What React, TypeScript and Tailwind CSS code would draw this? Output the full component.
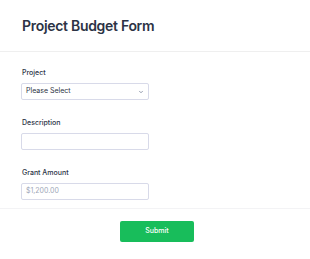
import { ChevronDown } from "lucide-react";

export default function App() {
  return (
    <div
      className="w-[310px] h-[259px] bg-white overflow-hidden"
      style={{ fontFamily: "Inter, 'Noto Sans', sans-serif" }}
    >
      {/* Header */}
      <div className="h-[52px] px-[22px] pt-[16px] border-b border-[#efefef]">
        <h1 className="text-[14px] font-semibold tracking-[-0.3px] text-[#2c3345] leading-[20px]">
          Project Budget Form
        </h1>
      </div>

      {/* Fields */}
      <div className="px-[21px] pt-[16px] border-b border-[#f3f3f5] h-[157px]">
        <div>
          <label className="block text-[7px] font-medium text-[#2c3345] leading-[9px] pl-[1px]">
            Project
          </label>
          <div className="mt-[6px] w-[128px] h-[17px] border border-[#d8dae9] rounded-[2px] flex items-center justify-between px-[4px]">
            <span className="text-[7px] text-[#2c3345]">Please Select</span>
            <ChevronDown className="w-[6px] h-[6px] text-[#57647e]" strokeWidth={2.5} />
          </div>
        </div>

        <div className="mt-[18px]">
          <label className="block text-[7px] font-medium text-[#2c3345] leading-[9px] pl-[1px]">
            Description
          </label>
          <div className="mt-[6px] w-[128px] h-[17px] border border-[#d8dae9] rounded-[2px]" />
        </div>

        <div className="mt-[18px]">
          <label className="block text-[7px] font-medium text-[#2c3345] leading-[9px] pl-[1px]">
            Grant Amount
          </label>
          <div className="mt-[6px] w-[128px] h-[17px] border border-[#d8dae9] rounded-[2px] flex items-center px-[4px]">
            <span className="text-[7px] text-[#a0a8b8]">$1,200.00</span>
          </div>
        </div>
      </div>

      {/* Submit */}
      <div className="flex justify-center pt-[12px] pl-[4px]">
        <button className="w-[74px] h-[21px] bg-[#18bd5b] rounded-[2px] text-white text-[7px] font-medium">
          Submit
        </button>
      </div>
    </div>
  );
}
